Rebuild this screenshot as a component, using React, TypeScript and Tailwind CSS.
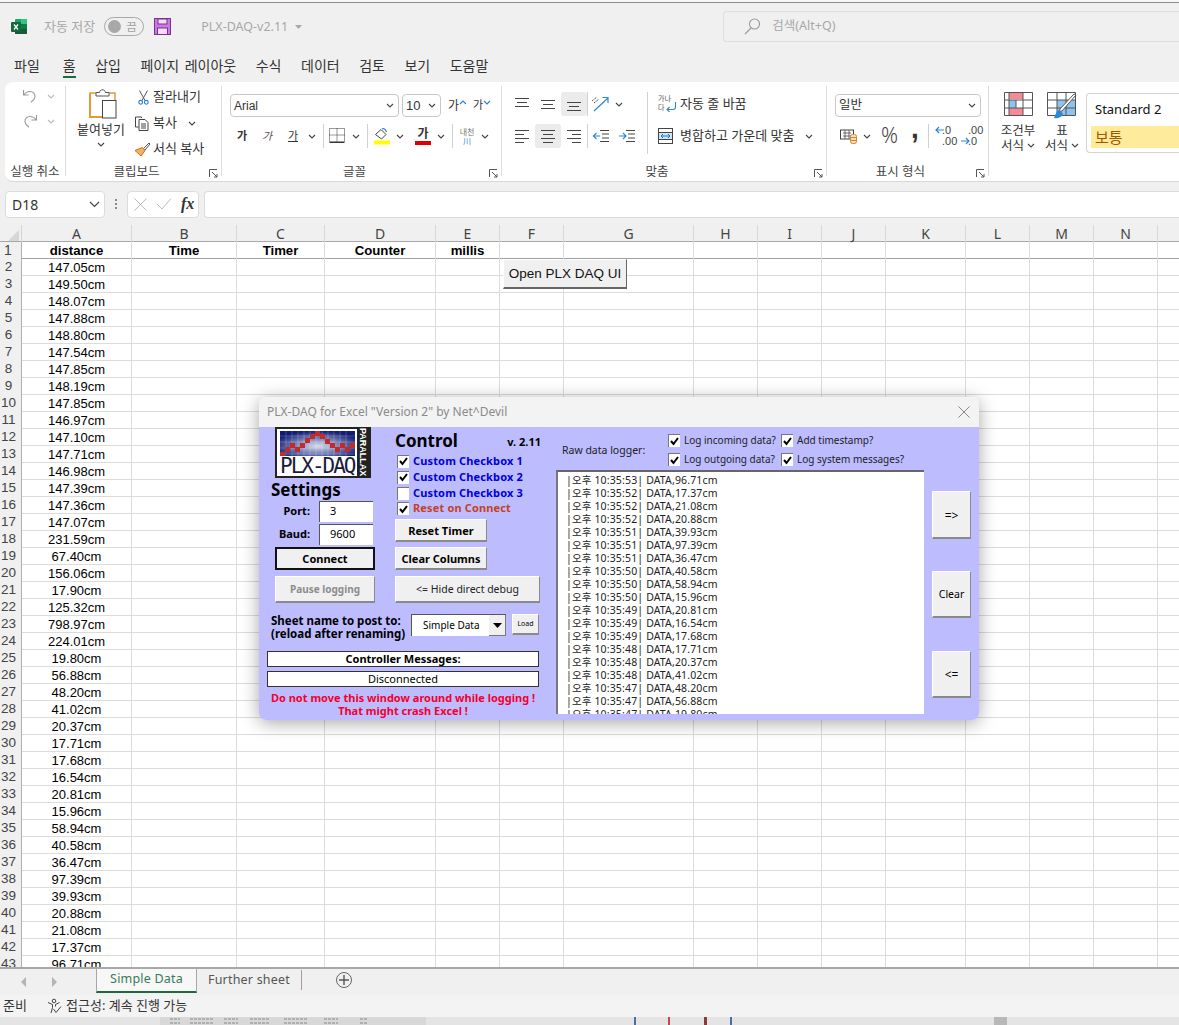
import type { ReactNode } from "react";

const KR = "font-['Noto_Sans','Noto_Sans_CJK_KR',sans-serif]";
const VB = "font-['Noto_Sans','Noto_Sans_CJK_KR',sans-serif]";
const ARIAL = "font-['Liberation_Sans',sans-serif]";

const columns = ["A", "B", "C", "D", "E", "F", "G", "H", "I", "J", "K", "L", "M", "N", ""];
const gridCols =
  "grid grid-cols-[22px_110px_105px_88px_111px_64px_64px_130px_64px_64px_64px_80px_64px_64px_64px_22px]";
const headers = ["distance", "Time", "Timer", "Counter", "millis"];

const distances = [
  "147.05", "149.50", "148.07", "147.88", "148.80", "147.54", "147.85", "148.19", "147.85", "146.97", "147.10",
  "147.71", "146.98", "147.39", "147.36", "147.07", "231.59", "67.40", "156.06", "17.90", "125.32", "798.97",
  "224.01", "19.80", "56.88", "48.20", "41.02", "20.37", "17.71", "17.68", "16.54", "20.81", "15.96", "58.94",
  "40.58", "36.47", "97.39", "39.93", "20.88", "21.08", "17.37", "96.71",
];

const logLines = [
  ["53", "96.71"], ["52", "17.37"], ["52", "21.08"], ["52", "20.88"], ["51", "39.93"], ["51", "97.39"], ["51", "36.47"],
  ["50", "40.58"], ["50", "58.94"], ["50", "15.96"], ["49", "20.81"], ["49", "16.54"], ["49", "17.68"], ["48", "17.71"],
  ["48", "20.37"], ["48", "41.02"], ["47", "48.20"], ["47", "56.88"], ["47", "19.80"],
];

const tabs = ["파일", "홈", "삽입", "페이지 레이아웃", "수식", "데이터", "검토", "보기", "도움말"];

const Chev = ({ color = "#444" }: { color?: string }) => (
  <svg width="8" height="5" viewBox="0 0 8 5" fill="none">
    <path d="M1 1l3 3 3-3" stroke={color} strokeWidth="1.1" />
  </svg>
);

const Launcher = () => (
  <svg width="9" height="9" viewBox="0 0 9 9" fill="none" stroke="#555">
    <path d="M.5 8V.5H8M3 3l5 5M8 5v3H5" />
  </svg>
);

const Slot = ({ w, children, active }: { w: string; children?: ReactNode; active?: boolean }) => (
  <div className={`${w} h-[24px] flex items-center justify-center shrink-0 rounded-[3px] ${active ? "bg-[#ebebeb]" : ""}`}>
    {children}
  </div>
);

const Sep = ({ h = "h-[24px]" }: { h?: string }) => <div className={`w-px ${h} bg-[#d0d0d0] shrink-0`} />;

const Lines = ({ rows }: { rows: [number, number, number][] }) => (
  <svg width="18" height="16" viewBox="0 0 18 16" stroke="#444" strokeWidth="1">
    {rows.map(([x1, x2, y], i) => (
      <path key={i} d={`M${x1} ${y}.5H${x2}`} />
    ))}
  </svg>
);

const Group = ({
  w,
  label,
  launcher,
  children,
}: {
  w: string;
  label: string;
  launcher?: boolean;
  children: ReactNode;
}) => (
  <div className={`${w} h-[90px] shrink-0 flex flex-col border-r border-[#dcdcdc]`}>
    <div className="h-[76px]">{children}</div>
    <div className="h-[14px] grid grid-cols-[1fr_auto_1fr] items-center">
      <span />
      <span
        className={`text-[12.5px] leading-[18px] text-[#444] whitespace-nowrap translate-y-[1px] ${
          launcher ? "-translate-x-[7px]" : ""
        }`}
      >
        {label}
      </span>
      {launcher ? (
        <span className="justify-self-end pr-[3px] translate-y-[2px]">
          <Launcher />
        </span>
      ) : (
        <span />
      )}
    </div>
  </div>
);

const ExcelLogo = () => (
  <svg width="17" height="17" viewBox="0 0 17 17">
    <rect x="4" y="1" width="12" height="15" rx="1" fill="#21a366" />
    <rect x="10" y="1" width="6" height="5" fill="#33c481" />
    <rect x="10" y="6" width="6" height="5" fill="#107c41" />
    <rect x="4" y="11" width="12" height="5" fill="#185c37" />
    <rect x="0" y="4" width="10" height="10" rx="1" fill="#0f6b3a" />
    <path d="M3 6.5l4 5M7 6.5l-4 5" stroke="#fff" strokeWidth="1.3" />
  </svg>
);

const SaveIcon = () => (
  <svg width="17" height="17" viewBox="0 0 17 17">
    <rect x=".5" y=".5" width="16" height="16" fill="#c77be0" stroke="#7c2f96" />
    <rect x="4" y="1" width="9" height="5" fill="#f3dcfa" stroke="#7c2f96" />
    <rect x="3.5" y="10" width="10" height="6.5" fill="#f3dcfa" stroke="#7c2f96" />
  </svg>
);

const UndoIcon = () => (
  <svg width="16" height="16" viewBox="0 0 16 16" fill="none" stroke="#999" strokeWidth="1.1">
    <path d="M1.5 2v5h5M2 7c1.5-2.5 3.5-3.5 6-3.5 3 0 5 2.2 5 4.8 0 2.3-1.5 4-4 6" />
  </svg>
);

const RedoIcon = () => (
  <svg width="16" height="16" viewBox="0 0 16 16" fill="none" stroke="#999" strokeWidth="1.1">
    <path d="M14.5 2v5h-5M14 7c-1.5-2.5-3.5-3.5-6-3.5-3 0-5 2.2-5 4.8 0 2.3 1.5 4 4 6" />
  </svg>
);

const PasteIcon = () => (
  <svg width="28" height="30" viewBox="0 0 28 30" fill="none">
    <path d="M1 4h25v24H1z" fill="#fff" stroke="#e69a35" strokeWidth="1.5" />
    <path d="M1 4v24h12" stroke="#e69a35" strokeWidth="2" />
    <path d="M7 7V3.5h3.5C11 1.5 12 .8 13.5.8S16 1.5 16.5 3.5H20V7z" fill="#fff" stroke="#555" />
    <rect x="13.5" y="11.5" width="13.5" height="17.5" fill="#fff" stroke="#444" />
  </svg>
);

const CutIcon = () => (
  <svg width="11" height="15" viewBox="0 0 11 15" fill="none">
    <path d="M1.5.5l5.5 10M9.5.5L4 10.5" stroke="#555" />
    <circle cx="2.7" cy="12.3" r="1.9" stroke="#2b7cd3" strokeWidth="1.1" />
    <circle cx="8.3" cy="12.3" r="1.9" stroke="#2b7cd3" strokeWidth="1.1" />
  </svg>
);

const CopyIcon = () => (
  <svg width="14" height="15" viewBox="0 0 14 15" fill="#fff" stroke="#444">
    <path d="M.5 1h6v1M.5 1v10h3" />
    <path d="M4 3.5h6l3 3v8H4z" />
    <path d="M6 8h5M6 10h5M6 12h5" />
  </svg>
);

const BrushIcon = () => (
  <svg width="17" height="15" viewBox="0 0 17 15" fill="none">
    <path d="M9.5 6.5L15 1l1 1-5 6z" fill="#fff" stroke="#555" />
    <path d="M1 8.5l7.5-3L11 8.5 7 14z" fill="#f2b163" stroke="#c8701b" />
  </svg>
);

const BorderIcon = () => (
  <svg width="16" height="16" viewBox="0 0 16 16" fill="none" stroke="#333">
    <rect x=".5" y=".5" width="15" height="13" strokeDasharray="1 1" />
    <path d="M8 .5v13M.5 7h15" strokeDasharray="1 1" />
    <path d="M.5 14.5h15" />
  </svg>
);

const FillIcon = () => (
  <svg width="18" height="18" viewBox="0 0 18 18" fill="none">
    <path d="M2.5 7.5L8 2.5l5 5L8.5 12z" fill="#fff" stroke="#444" />
    <path d="M9 2c1.5-1 3.5 0 4.5 3" stroke="#2b7cd3" strokeWidth="1.2" />
    <rect x="1" y="13.5" width="16" height="4" fill="#ffff00" />
  </svg>
);

const OrientIcon = () => (
  <svg width="20" height="20" viewBox="0 0 20 20" fill="none">
    <path d="M3 17L17 4M11.5 3.5H17V9" stroke="#2b88d8" strokeWidth="1.2" />
    <path d="M1 7l5-4M3 9l5-4" stroke="#555" strokeDasharray="2 1" />
  </svg>
);

const IndentIcon = ({ flip }: { flip?: boolean }) => (
  <svg width="18" height="16" viewBox="0 0 18 16" fill="none">
    <path d="M8 2.5h9M10 6h7M10 10h7M8 13.5h9" stroke="#444" />
    <path d={flip ? "M1 8h7M5 5l3 3-3 3" : "M1.5 8H8M4.5 5l-3 3 3 3"} stroke="#2b88d8" strokeWidth="1.2" />
  </svg>
);

const MergeIcon = () => (
  <svg width="15" height="16" viewBox="0 0 15 16" fill="none">
    <rect x=".5" y=".5" width="14" height="15" fill="#fff" stroke="#444" />
    <path d="M.5 4.5h14M.5 11.5h14" stroke="#444" />
    <rect x="1" y="5" width="13" height="6" fill="#cfe6fa" />
    <path d="M3 8h9M5 6L3 8l2 2M10 6l2 2-2 2" stroke="#1a78c2" />
  </svg>
);

const AccountIcon = () => (
  <svg width="18" height="16" viewBox="0 0 18 16" fill="none">
    <rect x=".5" y="2" width="13" height="9" fill="#fff" stroke="#444" />
    <path d="M3 5h8M3 8h8M5 2v9M9 2v9" stroke="#666" />
    <rect x="10.5" y="6.5" width="6" height="9" rx="2" fill="#fbe3c0" stroke="#d9822b" />
    <path d="M10.5 9.500h6M10.5 12.500h6" stroke="#d9822b" />
  </svg>
);

const DecIcon = ({ up }: { up?: boolean }) => (
  <div className={`w-[16px] h-[22px] relative text-[11px] leading-[10px] text-[#444] ${ARIAL}`}>
    <div className="pl-[7px]">{up ? ".00" : ".0"}</div>
    <div className="pl-[7px] mt-[1px] whitespace-nowrap">{up ? ".0" : ".00"}</div>
    <svg className="absolute left-0 top-[1px]" width="10" height="20" viewBox="0 0 10 20" fill="none" stroke="#2b88d8" strokeWidth="1.2">
      {up ? <path d="M0 15h8M5 12l3 3-3 3" /> : <path d="M1 4h8M4 1L1 4l3 3" />}
    </svg>
  </div>
);

const CondIcon = () => (
  <svg width="29" height="24" viewBox="0 0 29 24" fill="none">
    <rect x=".5" y=".5" width="28" height="23" fill="#fff" />
    <rect x="5" y="0" width="14" height="7" fill="#f58a94" />
    <rect x="5" y="16" width="14" height="8" fill="#f58a94" />
    <rect x="5" y="8" width="7" height="8" fill="#8ec2ef" />
    <path d="M.5.5h28v23H.5zM.5 8h28M.5 16h28M5 0v24M12 8v8M19 0v24" stroke="#555" />
  </svg>
);

const TableIcon = () => (
  <svg width="30" height="28" viewBox="0 0 30 28" fill="none">
    <rect x="10" y="8" width="18" height="16" fill="#8ec2ef" />
    <path d="M.5.5h28v23H.5zM.5 8h28M.5 16h28M10 0v24M19 0v24" stroke="#555" />
    <path d="M29 3L15 19l-3 1 1-3L27 2z" fill="#fff" stroke="#555" />
    <path d="M13 18c-3 0-4 3-6 8 4 1 8-1 9-4z" fill="#2b88d8" />
  </svg>
);

const Logo = () => (
  <div className="ml-[16px] w-[96px] h-[51px] bg-white border-2 border-[#222] flex">
    <div className="flex-1 pl-[3px] pt-[2px] min-w-0">
      <svg width="75" height="25" viewBox="0 0 75 25" className="block">
        <defs>
          <radialGradient id="logoGlow" cx="50%" cy="60%" r="60%">
            <stop offset="0%" stopColor="#d8dde8" />
            <stop offset="55%" stopColor="#6d78b4" />
            <stop offset="100%" stopColor="#121c72" />
          </radialGradient>
        </defs>
        <rect width="75" height="25" fill="url(#logoGlow)" />
        {[6, 12, 18, 24, 30, 36, 42, 48, 54, 60, 66].map((x) => (
          <path key={x} d={`M${x} 0v25`} stroke="#fff" strokeOpacity=".2" />
        ))}
        {[0, 1, 2, 3].map((i) => (
          <path key={i} d={`M0 ${6 * i + 5}h75`} stroke="#fff" strokeOpacity=".2" />
        ))}
        {[
          [0, 21], [5, 16], [10, 12], [15, 16], [20, 12], [25, 7], [30, 3], [35, 0], [40, 3], [45, 8], [50, 12], [55, 16],
          [60, 12], [65, 16], [70, 12],
        ].map(([x, y]) => (
          <rect key={x} x={x} y={y} width="5" height="5" fill="#c32a2a" />
        ))}
      </svg>
      <div className="font-['DejaVu_Sans_Mono',monospace] text-[21px] leading-[20px] text-[#1a1a3a] tracking-[-2px] whitespace-nowrap">
        PLX-DAQ
      </div>
    </div>
    <div className="w-[12px] bg-[#222] text-white text-[9px] leading-[12px] font-bold flex items-center justify-center [writing-mode:vertical-rl] font-['Liberation_Sans',sans-serif]">
      PARALLAX
    </div>
  </div>
);

const Btn = ({ className = "", children, dark }: { className?: string; children: ReactNode; dark?: boolean }) => (
  <div
    className={`bg-[#f0f0f0] flex items-center justify-center whitespace-nowrap shrink-0 ${
      dark
        ? "border-2 border-[#111]"
        : "border-t border-l border-t-white border-l-white border-b-2 border-r border-b-[#8a8a8a] border-r-[#8a8a8a]"
    } ${className}`}
  >
    {children}
  </div>
);

const Check = ({ on = true }: { on?: boolean }) => (
  <div className="w-[12px] h-[13px] bg-white border-t border-l border-t-[#777] border-l-[#777] shrink-0 flex items-center justify-center">
    {on && (
      <svg width="9" height="9" viewBox="0 0 9 9" fill="none">
        <path d="M1 4l2.5 3L8 1" stroke="#000" strokeWidth="2" />
      </svg>
    )}
  </div>
);

const CheckRow = ({ label, color, on, h }: { label: string; color: string; on?: boolean; h: string }) => (
  <div className={`${h} flex items-center pl-[2px] gap-[4px]`}>
    <Check on={on} />
    <span className={`text-[11px] font-bold tracking-[0.15px] ${color}`}>{label}</span>
  </div>
);

const Field = ({ value }: { value: string }) => (
  <div className="ml-[9px] w-[54px] h-[21px] pb-[2px] bg-white border-t border-l border-t-[#555] border-l-[#555] flex items-center pl-[10px] text-[11px] text-black">
    {value}
  </div>
);

const LogCheck = ({ label, w }: { label: string; w: string }) => (
  <div className={`${w} flex items-center gap-[4px] shrink-0`}>
    <Check />
    <span className="text-[10px] text-[#222] whitespace-nowrap">{label}</span>
  </div>
);

const Dialog = () => (
  <div
    className={`absolute left-[259px] top-[397px] w-[720px] h-[323px] rounded-[7px] overflow-hidden shadow-[0_3px_18px_rgba(0,0,0,0.35)] flex flex-col ${VB}`}
  >
    <div className="h-[30px] shrink-0 bg-[#f3f3f3] flex items-center justify-between pl-[8px] pr-[9px]">
      <span className="text-[12px] text-[#8a8a8a]">PLX-DAQ for Excel "Version 2" by Net^Devil</span>
      <svg width="12" height="12" viewBox="0 0 12 12" stroke="#888" strokeWidth="1">
        <path d="M.5.5l11 11M11.5.5l-11 11" />
      </svg>
    </div>
    <div className="flex-1 bg-[#bcbcff] flex text-black">
      <div className="w-[291px] shrink-0 flex flex-col">
        <div className="flex h-[176px]">
          <div className="w-[136px] shrink-0 flex flex-col">
            <Logo />
            <div className="ml-[12px] h-[20px] mt-[2px] text-[17px] leading-[20px] font-bold">Settings</div>
            <div className="flex items-center h-[24px]">
              <span className="w-[51px] text-right text-[11px] font-bold">Port:</span>
              <Field value="3" />
            </div>
            <div className="flex items-center h-[23px]">
              <span className="w-[51px] text-right text-[11px] font-bold">Baud:</span>
              <Field value="9600" />
            </div>
            <Btn dark className="ml-[16px] mt-[1px] w-[100px] h-[23px] pt-[2px] text-[11px] font-bold">
              Connect
            </Btn>
            <Btn className="ml-[16px] mt-[6px] w-[100px] h-[27px] pt-[1px] text-[10px] font-bold text-[#8c8c8c]">
              Pause logging
            </Btn>
          </div>
          <div className="flex-1 flex flex-col">
            <div className="h-[26px] flex items-end justify-between pr-[9px]">
              <span className="text-[17px] leading-[24px] font-bold">Control</span>
              <span className="text-[11px] leading-[23px] font-bold">v. 2.11</span>
            </div>
            <CheckRow h="h-[16px]" label="Custom Checkbox 1" color="text-[#0000d8]" />
            <CheckRow h="h-[16px]" label="Custom Checkbox 2" color="text-[#0000d8]" />
            <CheckRow h="h-[16px]" label="Custom Checkbox 3" color="text-[#0000d8]" on={false} />
            <CheckRow h="h-[15px]" label="Reset on Connect" color="text-[#c4421f]" />
            <Btn className="mt-[3px] w-[92px] h-[23px] pt-[2px] text-[11px] font-bold">Reset Timer</Btn>
            <Btn className="mt-[5px] w-[92px] h-[23px] pt-[2px] text-[11px] font-bold">Clear Columns</Btn>
            <Btn className="mt-[6px] w-[145px] h-[27px] pt-[1px] text-[10.5px] text-[#222]">{"<= Hide direct debug"}</Btn>
          </div>
        </div>
        <div className="mt-[11px] h-[26px] flex">
          <div className="ml-[12px] w-[140px] text-[11.5px] leading-[13px] font-bold whitespace-nowrap">
            Sheet name to post to:
            <br />
            (reload after renaming)
          </div>
          <div className="w-[95px] h-[22px] bg-white border-t border-l border-t-[#555] border-l-[#555] flex items-center">
            <span className="flex-1 text-[10px] pl-[11px]">Simple Data</span>
            <div className="w-[17px] h-full bg-[#f0f0f0] border-b border-r border-[#777] flex items-center justify-center">
              <svg width="9" height="5" viewBox="0 0 9 5">
                <path d="M0 0h9L4.5 5z" fill="#000" />
              </svg>
            </div>
          </div>
          <Btn className="ml-[6px] w-[27px] h-[21px] text-[7px]">Load</Btn>
        </div>
        <div className="mt-[11px] ml-[8px] w-[272px] h-[16px] bg-white border border-[#333] flex items-center justify-center text-[11px] font-bold">
          Controller Messages:
        </div>
        <div className="mt-[4px] ml-[8px] w-[272px] h-[16px] bg-white border border-[#333] flex items-center justify-center text-[11px]">
          Disconnected
        </div>
        <div className="mt-[4px] w-[288px] text-center text-[11px] leading-[13px] font-bold text-[#f5002d]">
          Do not move this window around while logging !
          <br />
          That might crash Excel !
        </div>
      </div>
      <div className="flex-1 flex flex-col pl-[6px]">
        <div className="h-[43px] flex shrink-0">
          <div className="w-[112px] pl-[6px] pt-[15px] text-[10.5px] leading-[16px] text-[#222]">Raw data logger:</div>
          <div className="flex flex-col pt-[4px]">
            <div className="flex h-[19px]">
              <LogCheck w="w-[113px]" label="Log incoming data?" />
              <LogCheck w="w-[120px]" label="Add timestamp?" />
            </div>
            <div className="flex h-[19px]">
              <LogCheck w="w-[113px]" label="Log outgoing data?" />
              <LogCheck w="w-[120px]" label="Log system messages?" />
            </div>
          </div>
        </div>
        <div className="flex">
          <div className="w-[368px] h-[244px] bg-white border-t-2 border-l-2 border-t-[#666] border-l-[#777] overflow-hidden pl-[8px] pt-[2px] shrink-0">
            {logLines.map(([sec, val], i) => (
              <div key={i} className="h-[13px] text-[10.5px] leading-[13px] tracking-[0.15px] text-[#222] whitespace-nowrap">
                |오후 10:35:{sec}| DATA,{val}cm
              </div>
            ))}
          </div>
          <div className="ml-[8px] w-[39px] flex flex-col">
            <Btn className="mt-[21px] h-[48px] pt-[2px] text-[12px]">{"=>"}</Btn>
            <Btn className="mt-[32px] h-[47px] pt-[2px] text-[10.5px]">Clear</Btn>
            <Btn className="mt-[33px] h-[47px] pt-[1px] text-[12px]">{"<="}</Btn>
          </div>
        </div>
      </div>
    </div>
  </div>
);

const Ribbon = () => (
  <div className={`ml-[5px] h-[100px] bg-white rounded-l-[8px] border-b border-[#d8d8d8] pt-[4px] flex text-[13px] text-[#333] ${KR}`}>
    <Group w="w-[61px]" label="실행 취소">
      <div className="flex flex-col gap-[5px] pl-[17px]">
        <div className="h-[20px] flex items-center gap-[9px]">
          <UndoIcon />
          <Chev color="#bbb" />
        </div>
        <div className="h-[20px] flex items-center gap-[9px]">
          <RedoIcon />
          <Chev color="#bbb" />
        </div>
      </div>
    </Group>
    <Group w="w-[156px]" label="클립보드" launcher>
      <div className="flex">
        <div className="w-[66px] flex flex-col items-center shrink-0 pt-[3px] pl-[4px]">
          <div className="translate-x-[2px]">
            <PasteIcon />
          </div>
          <div className="mt-[1px] leading-[18px] whitespace-nowrap">붙여넣기</div>
          <div className="mt-[4px]">
            <Chev />
          </div>
        </div>
        <div className="flex flex-col gap-[4px]">
          <div className="h-[22px] flex items-center">
            <div className="w-[20px] flex justify-center pl-[2px]">
              <CutIcon />
            </div>
            <span className="ml-[1px]">잘라내기</span>
          </div>
          <div className="h-[22px] flex items-center">
            <div className="w-[20px] flex justify-center">
              <CopyIcon />
            </div>
            <span className="ml-[1px]">복사</span>
            <span className="ml-[11px]">
              <Chev />
            </span>
          </div>
          <div className="h-[22px] flex items-center">
            <div className="w-[20px] flex justify-center">
              <BrushIcon />
            </div>
            <span className="ml-[1px]">서식 복사</span>
          </div>
        </div>
      </div>
    </Group>
    <Group w="w-[280px]" label="글꼴" launcher>
      <div className="pl-[8px] pt-[8px]">
        <div className="flex h-[23px] items-center">
          <div className={`w-[169px] h-[23px] border border-[#c8c8c8] rounded-[4px] flex items-center justify-between px-[3px] pr-[4px] text-[12px] ${ARIAL}`}>
            Arial
            <Chev />
          </div>
          <div className={`ml-[3px] w-[39px] h-[23px] border border-[#c8c8c8] rounded-[4px] flex items-center justify-between pl-[3px] pr-[4px] text-[13px] ${ARIAL}`}>
            10
            <Chev />
          </div>
          <span className="ml-[7px] text-[12px]">가</span>
          <span className="-translate-y-[3px] rotate-180">
            <Chev color="#2b7cd3" />
          </span>
          <span className="ml-[6px] text-[11px]">가</span>
          <span className="-translate-y-[3px]">
            <Chev color="#2b7cd3" />
          </span>
        </div>
        <div className="flex items-center mt-[7px] h-[24px]">
          <Slot w="w-[24px]">
            <b className="text-[11px]">가</b>
          </Slot>
          <Slot w="w-[26px]">
            <i className="text-[11px] text-[#555]">가</i>
          </Slot>
          <Slot w="w-[26px]">
            <span className="text-[11px] underline">가</span>
          </Slot>
          <Slot w="w-[12px]">
            <Chev />
          </Slot>
          <div className="w-[5px]" />
          <Sep />
          <Slot w="w-[26px]">
            <BorderIcon />
          </Slot>
          <Slot w="w-[12px]">
            <Chev />
          </Slot>
          <div className="w-[5px]" />
          <Sep />
          <Slot w="w-[28px]">
            <FillIcon />
          </Slot>
          <Slot w="w-[8px]">
            <Chev />
          </Slot>
          <div className="w-[5px]" />
          <Slot w="w-[28px]">
            <div className="flex flex-col items-center">
              <b className="text-[12px] leading-[14px]">가</b>
              <div className="w-[16px] h-[4px] bg-[#e00000]" />
            </div>
          </Slot>
          <Slot w="w-[8px]">
            <Chev />
          </Slot>
          <div className="w-[7px]" />
          <Sep />
          <Slot w="w-[28px]">
            <div className="flex flex-col items-center text-[8px] leading-[9px] text-[#777]">
              내천
              <span className="text-[#2b88d8]">川</span>
            </div>
          </Slot>
          <Slot w="w-[8px]">
            <Chev />
          </Slot>
        </div>
      </div>
    </Group>
    <Group w="w-[325px]" label="맞춤" launcher>
      <div className="flex pt-[6px]">
        <div className="w-[145px] pl-[7px] flex flex-col gap-[8px]">
          <div className="flex items-center">
            <Slot w="w-[26px]">
              <Lines rows={[[2, 16, 2], [4, 14, 6], [2, 16, 10]]} />
            </Slot>
            <Slot w="w-[26px]">
              <Lines rows={[[2, 16, 4], [4, 14, 8], [2, 16, 12]]} />
            </Slot>
            <Slot w="w-[26px]" active>
              <Lines rows={[[2, 16, 6], [4, 14, 10], [2, 16, 14]]} />
            </Slot>
            <Sep />
            <Slot w="w-[26px]">
              <OrientIcon />
            </Slot>
            <Slot w="w-[9px]">
              <Chev />
            </Slot>
          </div>
          <div className="flex items-center">
            <Slot w="w-[26px]">
              <Lines rows={[[2, 16, 2], [2, 11, 6], [2, 16, 10], [2, 11, 14]]} />
            </Slot>
            <Slot w="w-[26px]" active>
              <Lines rows={[[2, 16, 2], [4, 14, 6], [2, 16, 10], [4, 14, 14]]} />
            </Slot>
            <Slot w="w-[26px]">
              <Lines rows={[[2, 16, 2], [7, 16, 6], [2, 16, 10], [7, 16, 14]]} />
            </Slot>
            <Sep />
            <Slot w="w-[26px]">
              <IndentIcon />
            </Slot>
            <Slot w="w-[26px]">
              <IndentIcon flip />
            </Slot>
          </div>
        </div>
        <Sep h="h-[62px]" />
        <div className="flex flex-col gap-[8px] pl-[10px]">
          <div className="h-[24px] flex items-center">
            <div className="w-[22px] h-[20px] text-[7px] leading-[9px] text-[#555] relative">
              가나
              <br />
              다
              <svg className="absolute left-[8px] top-[8px]" width="11" height="10" viewBox="0 0 11 10" fill="none" stroke="#2b88d8" strokeWidth="1.1">
                <path d="M9.5 0v5c0 1.500-1 2.500-2.500 2.500H1M3.500 5L1 7.500 3.500 10" />
              </svg>
            </div>
            <span>자동 줄 바꿈</span>
          </div>
          <div className="h-[24px] flex items-center">
            <div className="w-[22px]">
              <MergeIcon />
            </div>
            <span>병합하고 가운데 맞춤</span>
            <span className="ml-[11px]">
              <Chev />
            </span>
          </div>
        </div>
      </div>
    </Group>
    <Group w="w-[162px]" label="표시 형식" launcher>
      <div className="pl-[8px] pt-[8px]">
        <div className="w-[146px] h-[23px] border border-[#c8c8c8] rounded-[4px] flex items-center justify-between pl-[3px] pr-[4px] text-[12.5px]">
          일반
          <Chev />
        </div>
        <div className="flex items-center mt-[7px] h-[24px]">
          <Slot w="w-[27px]">
            <AccountIcon />
          </Slot>
          <Slot w="w-[10px]">
            <Chev />
          </Slot>
          <Slot w="w-[35px]">
            <span className="text-[21px] font-light text-[#444]">%</span>
          </Slot>
          <Slot w="w-[16px]">
            <span className={`text-[28px] leading-[28px] font-bold -translate-y-[7px] ${ARIAL}`}>,</span>
          </Slot>
          <div className="w-[5px]" />
          <Sep />
          <div className="w-[6px]" />
          <DecIcon />
          <div className="w-[10px]" />
          <DecIcon up />
        </div>
      </div>
    </Group>
    <div className="flex-1 flex pt-[6px] min-w-0">
      <div className="w-[44px] ml-[7px] flex flex-col items-center text-[12.5px] leading-[15px]">
        <CondIcon />
        <div className="mt-[7px]">조건부</div>
        <div className="flex items-center gap-[3px]">
          서식
          <Chev />
        </div>
      </div>
      <div className="w-[44px] flex flex-col items-center text-[12.5px] leading-[15px]">
        <TableIcon />
        <div className="mt-[3px]">표</div>
        <div className="flex items-center gap-[3px]">
          서식
          <Chev />
        </div>
      </div>
      <div className="ml-[2px] flex-1 h-[60px] mt-[1px] border border-r-0 border-[#d4d4d4] rounded-l-[4px] pl-[4px]">
        <div className="h-[32px] pl-[4px] flex items-center text-[13px] text-[#111]">Standard 2</div>
        <div className="h-[22px] bg-[#ffeb9c] pl-[4px] flex items-center text-[15px] text-[#9c5700]">보통</div>
      </div>
    </div>
  </div>
);

const FormulaBar = () => (
  <div className="mt-[8px] h-[28px] flex items-center pl-[5px] shrink-0">
    <div className={`w-[100px] h-[27px] bg-white rounded-[4px] border border-[#dcdcdc] flex items-center justify-between pl-[6px] pr-[4px] text-[14px] text-[#333] ${KR}`}>
      D18
      <svg width="11" height="7" viewBox="0 0 11 7" fill="none" stroke="#444" strokeWidth="1.2">
        <path d="M1 1l4.500 4.500L10 1" />
      </svg>
    </div>
    <div className="w-[22px] flex flex-col items-center gap-[2px]">
      <i className="w-[2px] h-[2px] bg-[#888]" />
      <i className="w-[2px] h-[2px] bg-[#888]" />
      <i className="w-[2px] h-[2px] bg-[#888]" />
    </div>
    <div className="w-[72px] h-[27px] bg-white rounded-[4px] border border-[#dcdcdc] flex items-center pl-[6px] gap-[9px]">
      <svg width="13" height="13" viewBox="0 0 13 13" stroke="#bbb">
        <path d="M.5.5l12 12M12.5.5l-12 12" />
      </svg>
      <svg width="16" height="12" viewBox="0 0 16 12" fill="none" stroke="#bbb">
        <path d="M1 6l5 5L15 .5" />
      </svg>
      <span className="font-['Liberation_Serif',serif] italic font-bold text-[16px] leading-[20px] text-[#333]">fx</span>
    </div>
    <div className="ml-[5px] flex-1 h-[27px] bg-white rounded-l-[4px] border border-r-0 border-[#dcdcdc]" />
  </div>
);

const Sheet = () => (
  <div className={`mt-[7px] flex-1 min-h-0 flex flex-col bg-white text-[13px] ${ARIAL}`}>
    <div className={`${gridCols} h-[17px] shrink-0 bg-[#f0f0f0] border-b border-[#a8a8a8]`}>
      <div className="relative border-r border-[#d4d4d4]">
        <svg className="absolute right-[2px] bottom-[1px]" width="11" height="11" viewBox="0 0 11 11">
          <path d="M11 0v11H0z" fill="#d6d6d6" />
        </svg>
      </div>
      {columns.map((c, i) => (
        <div key={i} className={`border-r border-[#d8d8d8] text-center text-[14px] leading-[17px] text-[#444] ${KR}`}>
          {c}
        </div>
      ))}
    </div>
    <div className="flex-1 min-h-0 overflow-hidden">
      <div className={`${gridCols} h-[17px] border-b border-[#a0a0a0]`}>
        <div className="bg-[#f0f0f0] border-r border-[#b0b0b0] text-center pr-[5px] text-[14px] leading-[16px] text-[#444]">1</div>
        {columns.map((_, i) => (
          <div key={i} className="border-r border-[#dcdcdc] text-center font-bold text-[13.2px] leading-[17px] text-black whitespace-nowrap">
            {headers[i] ?? ""}
          </div>
        ))}
      </div>
      {distances.map((d, r) => (
        <div key={r} className={`${gridCols} h-[17px] border-b border-[#dcdcdc]`}>
          <div className="bg-[#f0f0f0] border-r border-[#b0b0b0] text-center pr-[4px] text-[13.5px] leading-[16px] text-[#444]">{r + 2}</div>
          {columns.map((_, i) => (
            <div key={i} className="border-r border-[#dcdcdc] text-center leading-[17px] text-black whitespace-nowrap">
              {i === 0 ? `${d}cm` : ""}
            </div>
          ))}
        </div>
      ))}
    </div>
  </div>
);

const Bottom = () => (
  <div className={`shrink-0 ${KR}`}>
    <div className="h-[28px] bg-[#f0f0f0] border-t-2 border-[#a8a8a8] flex items-start text-[12.5px]">
      <div className="w-[96px] h-full flex items-center">
        <svg className="ml-[21px]" width="36" height="10" viewBox="0 0 36 10" fill="#b4b4b4">
          <path d="M5 0v10L0 5zM31 0v10l5-5z" />
        </svg>
      </div>
      <div className="w-[101px] h-[24px] pb-[2px] bg-[#f7f7f7] border-l border-r border-[#a8a8a8] border-b-2 border-b-[#1b6b3f] flex items-center justify-center tracking-[0.2px] text-[#3a7a58]">
        Simple Data
      </div>
      <div className="w-[105px] h-[20px] mt-[1px] border-r border-[#a0a0a0] flex items-center justify-center tracking-[0.2px] text-[#555]">
        Further sheet
      </div>
      <div className="ml-[34px] mt-[3px] w-[16px] h-[16px] rounded-full border border-[#666] flex items-center justify-center">
        <svg width="10" height="10" viewBox="0 0 10 10" stroke="#555" strokeWidth="1.4">
          <path d="M5 0v10M0 5h10" />
        </svg>
      </div>
    </div>
    <div className="h-[22px] bg-[#f3f3f3] rounded-bl-[6px] flex items-center pl-[3px] text-[13px] text-[#333]">
      <span className="w-[44px]">준비</span>
      <svg width="16" height="16" viewBox="0 0 16 16" fill="none" stroke="#444">
        <circle cx="7" cy="3" r="1.8" />
        <path d="M1 4.500l4.500 2v3L4 15M12.500 4.500l-4 2v2M6.500 11L9 14.500l5-6" />
      </svg>
      <span className="ml-[3px]">접근성: 계속 진행 가능</span>
    </div>
  </div>
);

export default function App() {
  return (
    <div className="relative w-[1179px] h-[1025px] overflow-hidden bg-[#e4e4e4]">
      <div className="h-[2px] bg-[#f7f7f7]" />
      <div className="h-[1015px] flex flex-col bg-[#f0f0f0] border-t border-t-[#8e8e8e]">
        <div className={`h-[46px] shrink-0 flex items-center pl-[11px] pt-[1px] ${KR}`}>
          <ExcelLogo />
          <span className="ml-[16px] text-[13px] text-[#a8a8a8]">자동 저장</span>
          <div className="ml-[9px] w-[40px] h-[19px] rounded-full border border-[#a8a8a8] flex items-center pl-[3px] text-[11.5px] text-[#a0a0a0]">
            <i className="w-[13px] h-[13px] rounded-full bg-[#a8a8a8]" />
            <span className="ml-[5px]">끔</span>
          </div>
          <span className="ml-[10px]">
            <SaveIcon />
          </span>
          <span className="ml-[30px] text-[12.5px] leading-[20px] pt-[1px] text-[#a8a8a8]">PLX-DAQ-v2.11</span>
          <svg className="ml-[7px]" width="7" height="4" viewBox="0 0 7 4">
            <path d="M0 0h7L3.5 4z" fill="#a8a8a8" />
          </svg>
          <div className="ml-[421px] flex-1 h-[31px] border border-r-0 border-[#dedede] rounded-l-[4px] flex items-center pl-[20px] text-[12.5px] text-[#a8a8a8]">
            <svg width="17" height="17" viewBox="0 0 17 17" fill="none" stroke="#999" strokeWidth="1.1">
              <circle cx="10.5" cy="6" r="5" />
              <path d="M7 10l-6 6" />
            </svg>
            <span className="ml-[11px]">검색(Alt+Q)</span>
          </div>
        </div>
        <div className={`h-[33px] shrink-0 flex items-start pl-[14px] gap-[19.5px] pt-[7px] text-[14px] leading-[20px] text-[#333] ${KR}`}>
          {tabs.map((t) => (
            <div key={t} className={`whitespace-nowrap ${t === "파일" ? "mr-[3.5px]" : ""} ${t === "페이지 레이아웃" ? "[word-spacing:2px]" : ""}`}>
              {t}
              {t === "홈" && <div className="h-[2px] bg-[#1b6b3f]" />}
            </div>
          ))}
        </div>
        <Ribbon />
        <FormulaBar />
        <Sheet />
        <Bottom />
      </div>
      <svg className="block" width="1179" height="8" viewBox="0 0 1179 8">
        <rect x="160" width="266" height="8" fill="#d8d8d8" />
        <path d="M170 2h10M190 2h24M224 2h14M250 2h20M284 2h24M324 2h14M360 2h8" stroke="#888" strokeDasharray="3 1" />
        <path d="M170 6h10M190 6h24M224 6h14M250 6h20M284 6h24M324 6h14M360 6h8" stroke="#888" strokeDasharray="3 1" />
        <rect x="634" width="2" height="8" fill="#4a6fa5" />
        <rect x="668" width="2" height="8" fill="#c04a4a" />
        <rect x="704" width="3" height="8" fill="#8a3a3a" />
        <rect x="730" width="2" height="8" fill="#4a6fa5" />
        <rect x="994" width="13" height="8" fill="#b8b8b8" />
      </svg>
      <Btn className={`absolute left-[503px] top-[259px] w-[124px] h-[30px] pt-[1px] text-[13.5px] text-[#111] !border-b-[#666] !border-r-[#666] ${ARIAL}`}>
        Open PLX DAQ UI
      </Btn>
      <Dialog />
    </div>
  );
}
